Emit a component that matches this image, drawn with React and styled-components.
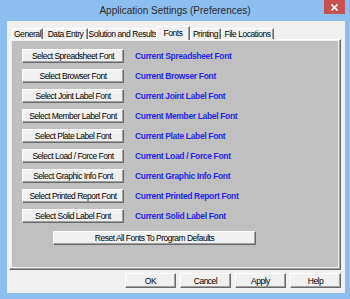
import React from "react";
import styled, { createGlobalStyle } from "styled-components";

const Global = createGlobalStyle`
  html, body { margin: 0; padding: 0; background: #8cbff0; }
  body { font-family: "Liberation Sans", Arial, sans-serif; }
  * { box-sizing: border-box; }
`;

const Window = styled.div`
  width: 350px;
  height: 299px;
  background: #8cbff0;
  display: flex;
  flex-direction: column;
  overflow: hidden;
`;

const TitleBar = styled.div`
  height: 21px;
  flex: none;
  display: grid;
  grid-template-columns: 1fr auto 1fr;
  align-items: center;
`;

const Title = styled.div`
  grid-column: 2;
  font-size: 10px;
  color: #2a2a2a;
  white-space: nowrap;
  padding-bottom: 1px;
`;

const CloseBtn = styled.div`
  grid-column: 3;
  justify-self: end;
  align-self: start;
  width: 21px;
  height: 14px;
  margin-right: 5px;
  background: #c75050;
  display: flex;
  align-items: center;
  justify-content: center;
`;

const Frame = styled.div`
  flex: 1;
  display: flex;
  padding: 0 5px 6px 7px;
`;

const Client = styled.div`
  flex: 1;
  background: #f0f0f0;
  display: flex;
  flex-direction: column;
  padding: 5px 4px 5px 2px;
`;

const TabRow = styled.div`
  display: flex;
  align-items: flex-end;
  height: 13px;
  padding-left: 3px;
  position: relative;
  z-index: 1;
`;

const Tab = styled.div`
  width: ${(p) => p.$w}px;
  height: ${(p) => (p.$active ? 14 : 11)}px;
  margin: ${(p) => (p.$active ? "0 0 -1px -2px" : "0")};
  background: #f0f0f0;
  border-top: 1px solid #fff;
  border-left: 1px solid #fff;
  border-right: 1px solid #696969;
  box-shadow: inset -1px 0 #a0a0a0;
  font-size: 8.5px;
  letter-spacing: -0.45px;
  color: #000;
  display: flex;
  align-items: ${(p) => (p.$active ? "flex-start" : "center")};
  padding-top: ${(p) => (p.$active ? "1px" : "0")};
  justify-content: center;
  white-space: nowrap;
  position: relative;
  z-index: ${(p) => (p.$active ? 2 : 1)};
`;

const Panel = styled.div`
  height: 231px;
  flex: none;
  display: flex;
  border-top: 1px solid #fff;
  border-left: 1px solid #fff;
  border-right: 1px solid #696969;
  border-bottom: 1px solid #696969;
  box-shadow: inset -1px -1px #a0a0a0;
  padding: 1px 2px 2px 2px;
`;

const Page = styled.div`
  flex: 1;
  background: #c0c0c0;
  padding: 8px 0 0 10px;
  display: flex;
  flex-direction: column;
  gap: 6px;
`;

const Row = styled.div`
  display: flex;
  align-items: center;
  gap: 11px;
`;

const Button = styled.div`
  width: ${(p) => p.$w}px;
  height: ${(p) => p.$h || 14}px;
  margin-left: ${(p) => p.$ml || 0}px;
  background: #f0f0f0;
  border-top: 1px solid #fff;
  border-left: 1px solid #fff;
  border-right: 1px solid #696969;
  border-bottom: 1px solid #696969;
  box-shadow: inset -1px -1px #a0a0a0;
  font-size: 8.5px;
  letter-spacing: -0.5px;
  color: #000;
  display: flex;
  align-items: center;
  justify-content: center;
  white-space: nowrap;
  flex: none;
`;

const Current = styled.div`
  font-size: 8.5px;
  font-weight: bold;
  letter-spacing: -0.35px;
  color: #2626f0;
  white-space: nowrap;
`;

const ResetWrap = styled.div`
  margin-top: 2px;
`;

const Footer = styled.div`
  display: flex;
  justify-content: flex-end;
  gap: 4px;
  margin-top: 3px;
`;

const tabs = [
  { label: "General", w: 31 },
  { label: "Data Entry", w: 45 },
  { label: "Solution and Results", w: 70 },
  { label: "Fonts", w: 34, active: true },
  { label: "Printing", w: 31 },
  { label: "File Locations", w: 53 },
];

const fonts = [
  "Spreadsheet",
  "Browser",
  "Joint Label",
  "Member Label",
  "Plate Label",
  "Load / Force",
  "Graphic Info",
  "Printed Report",
  "Solid Label",
];

export default function App() {
  return (
    <>
      <Global />
      <Window>
        <TitleBar>
          <Title>Application Settings (Preferences)</Title>
          <CloseBtn>
            <svg width="7" height="7" viewBox="0 0 7 7">
              <path d="M1 1L6 6M6 1L1 6" stroke="#fff" strokeWidth="1.7" strokeLinecap="square" />
            </svg>
          </CloseBtn>
        </TitleBar>
        <Frame>
          <Client>
            <TabRow>
              {tabs.map((t) => (
                <Tab key={t.label} $w={t.w} $active={t.active}>
                  {t.label}
                </Tab>
              ))}
            </TabRow>
            <Panel>
              <Page>
                {fonts.map((f) => (
                  <Row key={f}>
                    <Button $w={102}>Select {f} Font</Button>
                    <Current>Current {f} Font</Current>
                  </Row>
                ))}
                <ResetWrap>
                  <Button $w={203} $ml={31}>Reset All Fonts To Program Defaults</Button>
                </ResetWrap>
              </Page>
            </Panel>
            <Footer>
              <Button $w={51} $h={15}>OK</Button>
              <Button $w={51} $h={15}>Cancel</Button>
              <Button $w={51} $h={15}>Apply</Button>
              <Button $w={51} $h={15}>Help</Button>
            </Footer>
          </Client>
        </Frame>
      </Window>
    </>
  );
}
